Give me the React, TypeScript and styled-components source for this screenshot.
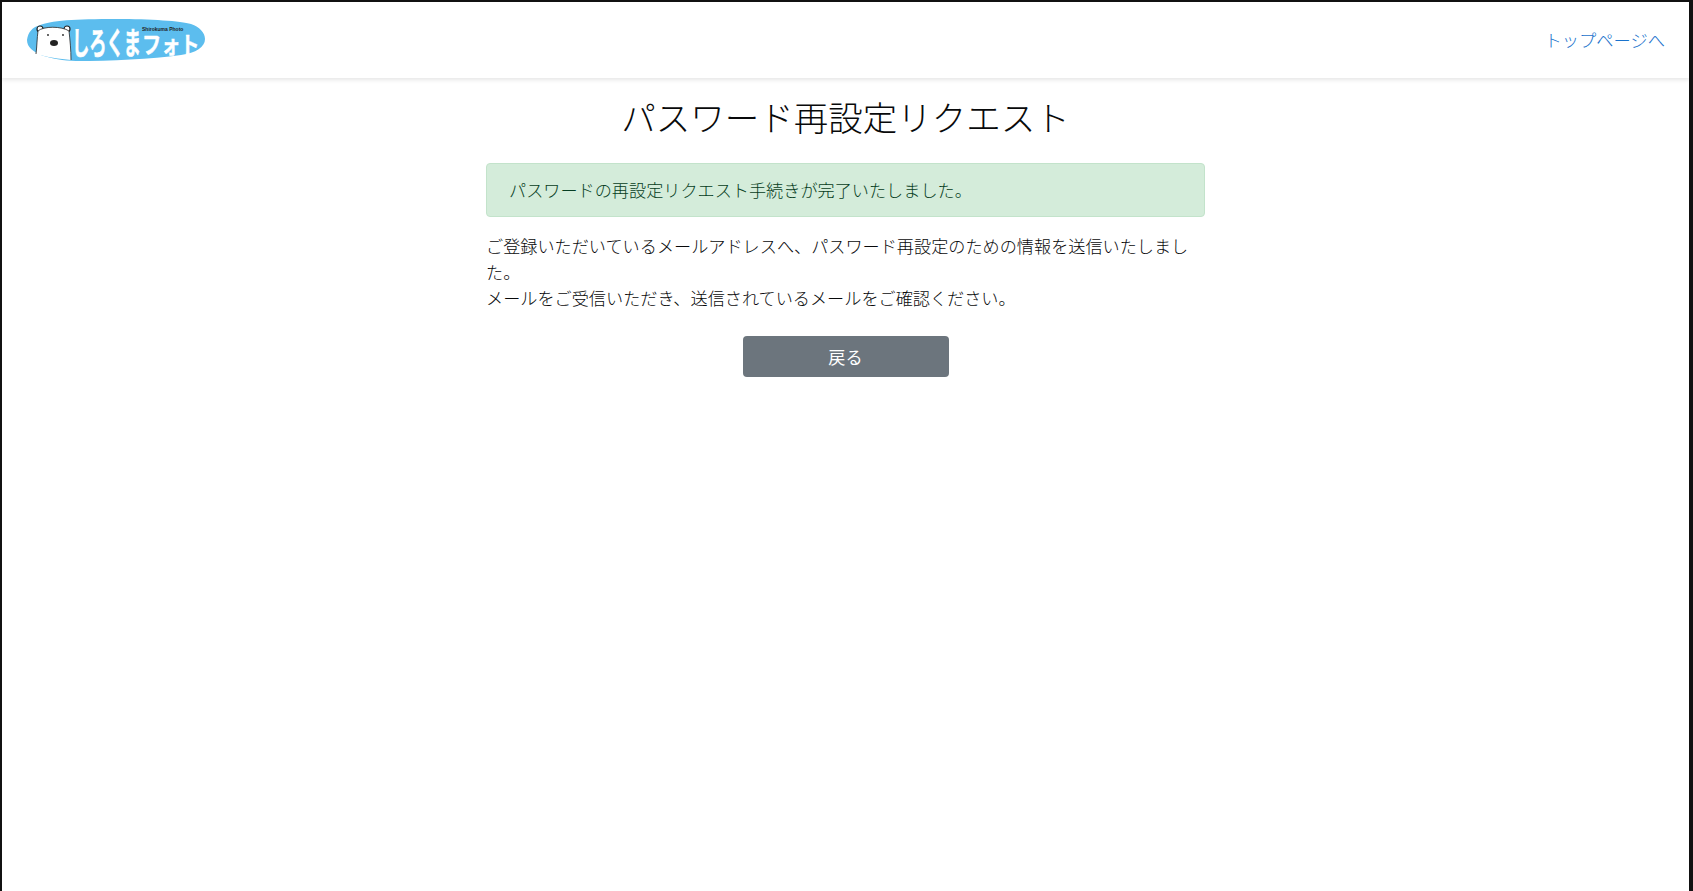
import styled, { createGlobalStyle } from "styled-components";

const GlobalStyle = createGlobalStyle`
  * {
    box-sizing: border-box;
  }

  html,
  body {
    margin: 0;
    padding: 0;
    background: #fff;
  }

  body {
    font-family: "Noto Sans CJK JP", "Liberation Sans", sans-serif;
    font-size: 17.15px;
    font-weight: 300;
    line-height: 1.6;
    color: #08090a;
  }
`;

const Frame = styled.div`
  height: 891px;
  overflow: hidden;
  border-style: solid;
  border-color: #111;
  border-width: 2px 4px 0 2px;
`;

const Header = styled.header`
  display: flex;
  justify-content: space-between;
  align-items: center;
  height: 76px;
  padding: 0 24px 0 24px;
  box-shadow: 0 2px 4px rgba(0, 0, 0, 0.1);
`;

const Logo = styled.a`
  display: block;
  width: 180px;
  height: 44px;
`;

const LogoName = styled.text`
  font-family: "Noto Sans CJK JP", sans-serif;
  font-weight: 700;
  font-size: 24px;
  fill: #fff;
  stroke: #fff;
  stroke-width: 0.5px;
`;

const LogoLatin = styled.text`
  font-family: "Liberation Sans", sans-serif;
  font-weight: 700;
  font-size: 5px;
  fill: #222;
`;

const TopLink = styled.a`
  font-size: 17.25px;
  color: #1a72cc;
  text-decoration: none;
`;

const Main = styled.main`
  width: 719px;
  margin: 0 auto;
  display: flex;
  flex-direction: column;
`;

const Title = styled.h1`
  margin: 18px 0 26px;
  font-size: 34.5px;
  font-weight: 300;
  line-height: 1.2;
  text-align: center;
  white-space: nowrap;
`;

const Alert = styled.div`
  height: 54px;
  padding: 0 22px 2px;
  display: flex;
  align-items: center;
  margin-bottom: 16px;
  color: #063d22;
  background: #d4ecda;
  border: 1px solid #c3e3cb;
  border-radius: 4px;
`;

const Message = styled.p`
  margin: 0 0 25px;
  line-height: 26px;
`;

const BackButton = styled.a`
  align-self: center;
  width: 206px;
  height: 41px;
  display: flex;
  align-items: center;
  justify-content: center;
  font-weight: 400;
  color: #fff;
  background: #6c757d;
  border-radius: 4px;
`;

export default function App() {
  return (
    <Frame>
      <GlobalStyle />
      <Header>
        <Logo>
          <svg viewBox="0 0 180 44" width="180" height="44">
            <path
              d="M1 22C2 14 7 9 12 8C24 2 50 1 90 1C125 1 155 3 165 6C174 9 179 15 179 21C179 29 170 35 155 37C125 41 85 43 50 43C25 42 1 36 1 22Z"
              fill="#5cbdee"
            />
            <circle cx="14" cy="11" r="3" fill="#fff" stroke="#222" strokeWidth="1.2" />
            <circle cx="41" cy="11" r="3" fill="#fff" stroke="#222" strokeWidth="1.2" />
            <path
              d="M12 13C17 8 36 8 43 13C44 22 45 32 45 42C34 41 20 39 10 36C11 28 11 20 12 13Z"
              fill="#fff"
            />
            <path
              d="M10 36C11 28 11 20 12 13C17 8 36 8 43 13C44 22 45 32 45 42"
              fill="none"
              stroke="#222"
              strokeWidth="0.8"
            />
            <ellipse cx="28" cy="25" rx="4" ry="3" fill="#222" />
            <circle cx="22" cy="17" r="0.9" fill="#222" />
            <circle cx="37" cy="17" r="0.9" fill="#222" />
            <LogoName transform="translate(46 36) scale(0.72 1.3)">しろくま</LogoName>
            <LogoName transform="translate(116 35) scale(0.8 0.95)">フォト</LogoName>
            <LogoLatin x="116" y="13">Shirokuma Photo</LogoLatin>
          </svg>
        </Logo>
        <TopLink>トップページへ</TopLink>
      </Header>
      <Main>
        <Title>パスワード再設定リクエスト</Title>
        <Alert>パスワードの再設定リクエスト手続きが完了いたしました。</Alert>
        <Message>
          ご登録いただいているメールアドレスへ、パスワード再設定のための情報を送信いたしました。
          <br />
          メールをご受信いただき、送信されているメールをご確認ください。
        </Message>
        <BackButton>戻る</BackButton>
      </Main>
    </Frame>
  );
}
